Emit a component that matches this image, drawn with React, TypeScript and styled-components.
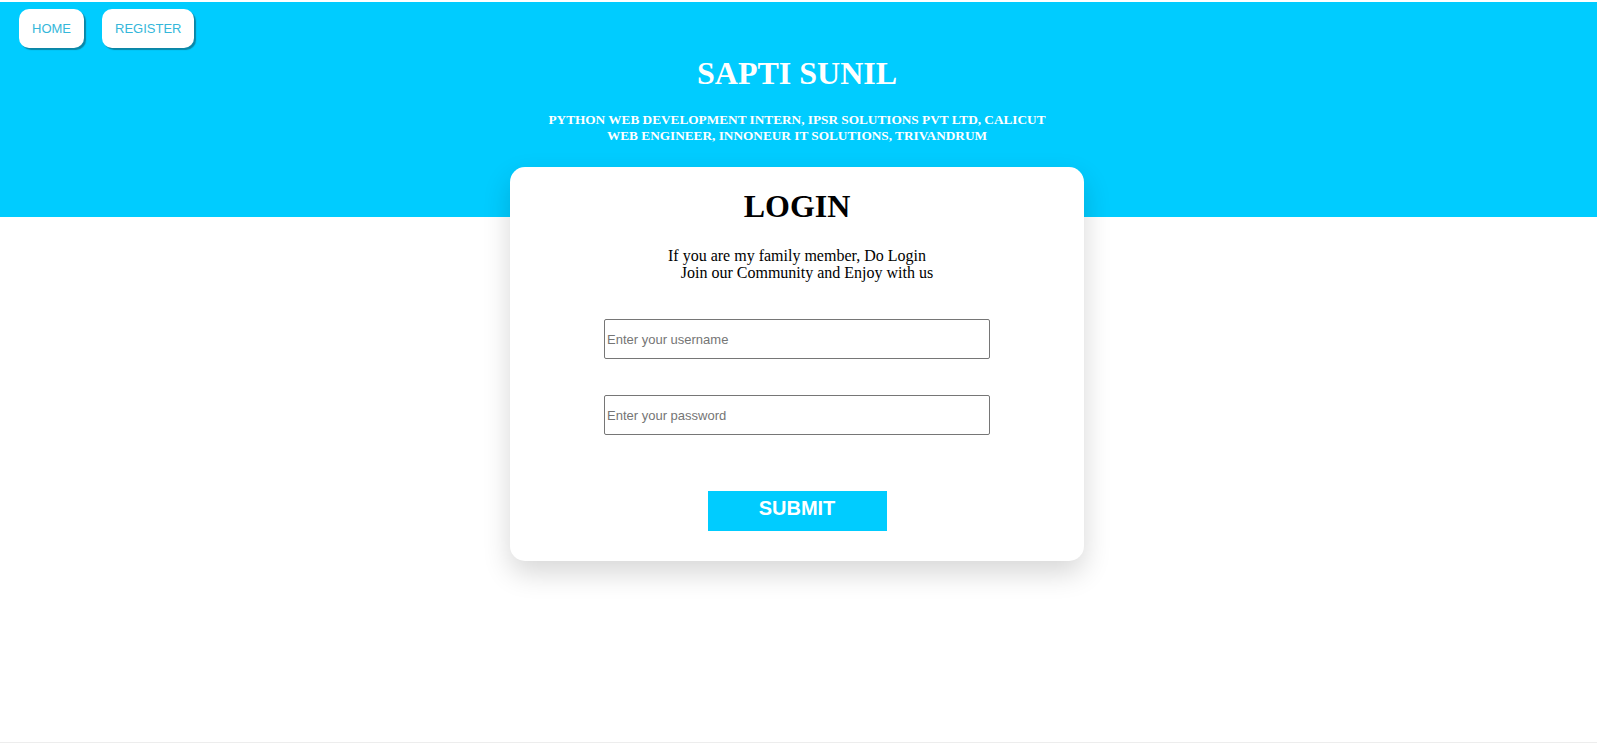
import React from "react";
import styled, { createGlobalStyle } from "styled-components";

const GlobalStyle = createGlobalStyle`
  html, body { margin: 0; padding: 0; background: #ffffff; }
  body { font-family: "Liberation Serif", "Times New Roman", serif; }
  * { box-sizing: border-box; }
`;

const Page = styled.div`
  min-height: 743px;
  height: 743px;
  padding-top: 2px;
  display: flex;
  flex-direction: column;
  background: #ffffff;
`;

const Header = styled.header`
  height: 215px;
  flex-shrink: 0;
  background: #00ccff;
  padding: 7px 22px 0 19px;
  display: flex;
  flex-direction: column;
`;

const Nav = styled.nav`
  display: flex;
  gap: 18px;
`;

const NavButton = styled.button`
  height: 39px;
  padding: 0 13px;
  border: none;
  border-radius: 10px;
  background: #ffffff;
  color: #35b7da;
  font-family: "Liberation Sans", Arial, sans-serif;
  font-size: 13px;
  text-transform: uppercase;
  box-shadow: 2px 2px 1px #0b86a6;
  cursor: pointer;
`;

const Title = styled.h1`
  margin: 7px 0 0;
  text-align: center;
  color: #ffffff;
  font-family: "Liberation Serif", "Times New Roman", serif;
  font-size: 32px;
  line-height: 36px;
  font-weight: bold;
`;

const Subtitle = styled.h5`
  margin: 21px 0 0;
  text-align: center;
  color: #ffffff;
  font-family: "Liberation Serif", "Times New Roman", serif;
  font-size: 13.28px;
  line-height: 15.5px;
  font-weight: bold;
`;

const Main = styled.main`
  padding-right: 3px;
  display: flex;
  justify-content: center;
`;

const Card = styled.section`
  width: 574px;
  margin-top: -50px;
  background: #ffffff;
  border-radius: 15px;
  box-shadow: 0 12px 28px rgba(0, 0, 0, 0.16);
  padding: 21px 0 30px;
  display: flex;
  flex-direction: column;
  align-items: center;
  position: relative;
`;

const CardTitle = styled.h1`
  margin: 0;
  font-family: "Liberation Serif", "Times New Roman", serif;
  font-size: 32px;
  line-height: 36px;
  font-weight: bold;
  color: #000000;
`;

const Intro = styled.p`
  margin: 23px 0 0;
  display: flex;
  flex-direction: column;
  align-items: center;
  font-size: 16px;
  line-height: 17px;
  color: #000000;
`;

const IntroLine = styled.span<{ $indent?: number }>`
  padding-left: ${(p) => p.$indent ?? 0}px;
`;

const Form = styled.form`
  margin-top: 38px;
  display: flex;
  flex-direction: column;
  align-items: center;
`;

const Field = styled.input`
  width: 386px;
  height: 40px;
  margin-bottom: ${(p) => (p.type === "password" ? 56 : 36)}px;
  padding: 0 2px;
  border: 1px solid #767676;
  border-radius: 2px;
  font-family: "Liberation Sans", Arial, sans-serif;
  font-size: 13px;
  color: #000;
  background: #fff;
  &::placeholder { color: #757575; }
`;

const Submit = styled.button`
  width: 179px;
  height: 40px;
  border: none;
  background: #00ccff;
  color: #ffffff;
  font-family: "Liberation Sans", Arial, sans-serif;
  font-size: 20px;
  font-weight: bold;
  padding: 0 0 6px;
  cursor: pointer;
`;

const Spacer = styled.div`
  flex: 1;
`;

const Footer = styled.footer`
  height: 1px;
  flex-shrink: 0;
  background: #ededed;
`;

export default function App() {
  return (
    <>
      <GlobalStyle />
      <Page>
        <Header>
          <Nav>
            <NavButton>Home</NavButton>
            <NavButton>Register</NavButton>
          </Nav>
          <Title>SAPTI SUNIL</Title>
          <Subtitle>
            PYTHON WEB DEVELOPMENT INTERN, IPSR SOLUTIONS PVT LTD, CALICUT
            <br />
            WEB ENGINEER, INNONEUR IT SOLUTIONS, TRIVANDRUM
          </Subtitle>
        </Header>
        <Main>
          <Card>
            <CardTitle>LOGIN</CardTitle>
            <Intro>
              <IntroLine>If you are my family member, Do Login</IntroLine>
              <IntroLine $indent={20}>Join our Community and Enjoy with us</IntroLine>
            </Intro>
            <Form onSubmit={(e) => e.preventDefault()}>
              <Field type="text" placeholder="Enter your username" />
              <Field type="password" placeholder="Enter your password" />
              <Submit type="submit">SUBMIT</Submit>
            </Form>
          </Card>
        </Main>
        <Spacer />
        <Footer />
      </Page>
    </>
  );
}
